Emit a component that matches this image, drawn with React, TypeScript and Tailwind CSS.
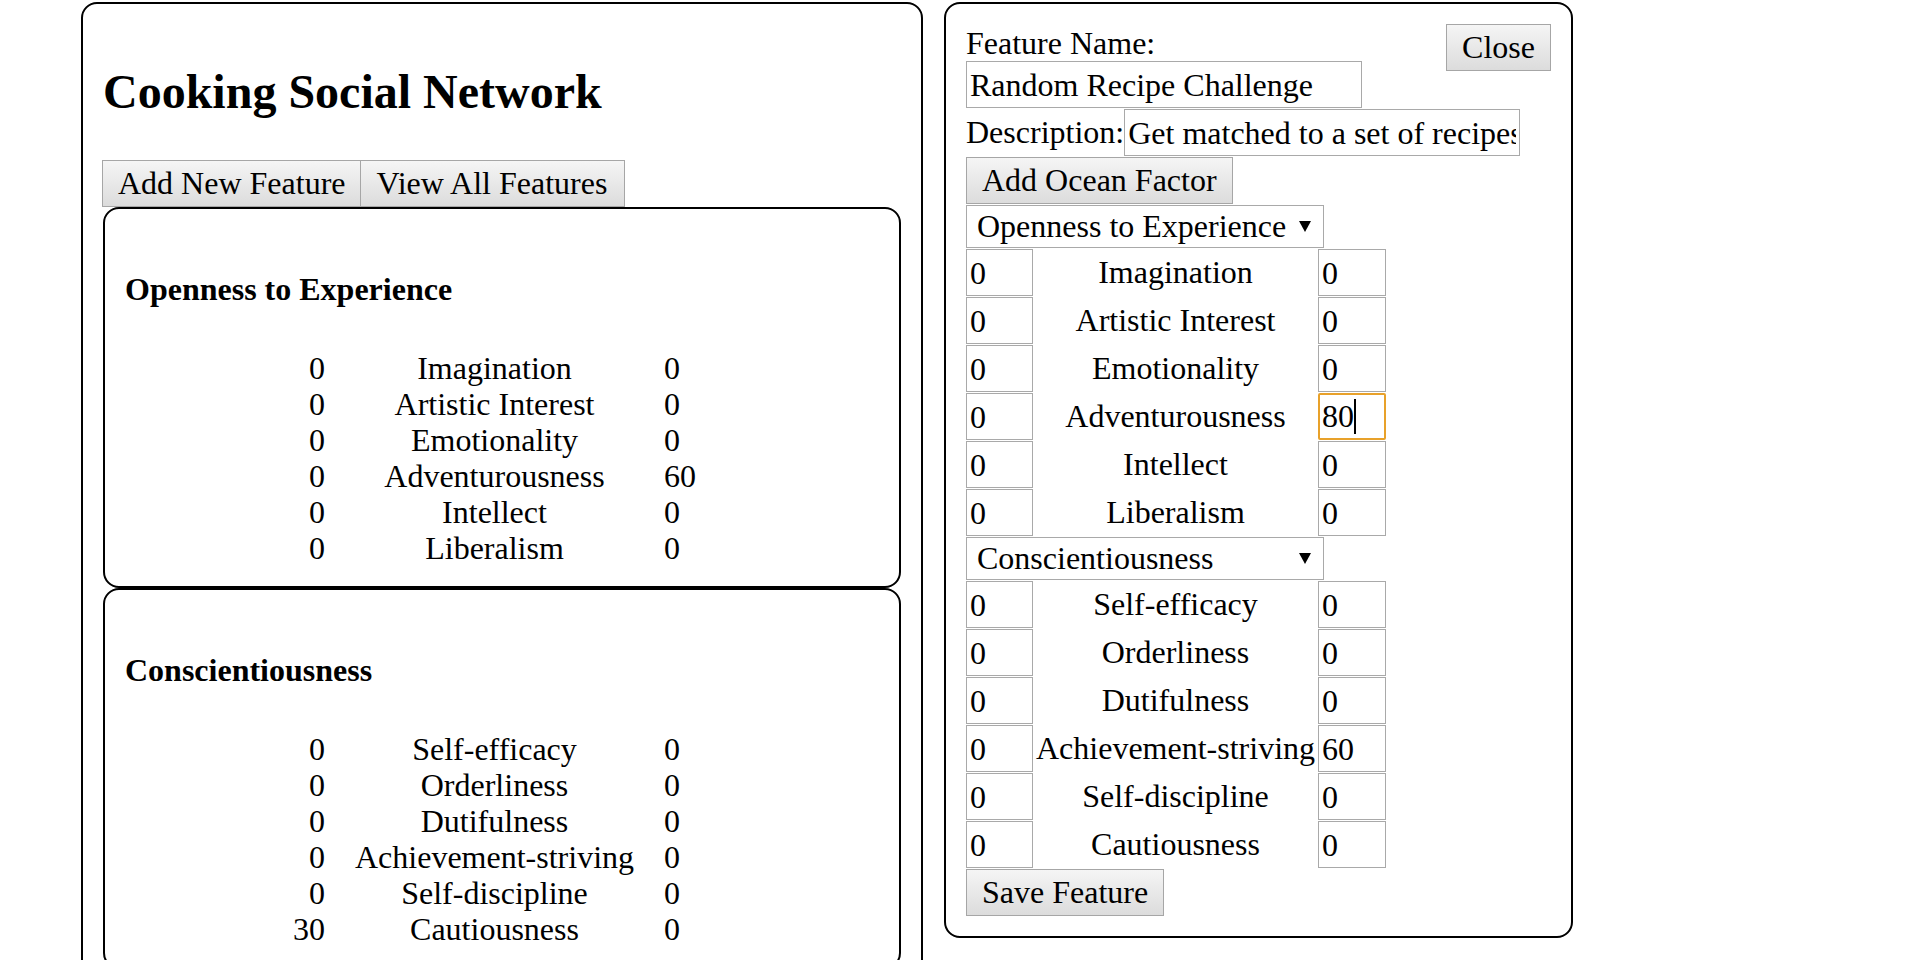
import React from 'react'

type Row = [number, string, number]

const openness: Row[] = [
  [0, 'Imagination', 0],
  [0, 'Artistic Interest', 0],
  [0, 'Emotionality', 0],
  [0, 'Adventurousness', 60],
  [0, 'Intellect', 0],
  [0, 'Liberalism', 0],
]

const conscientiousness: Row[] = [
  [0, 'Self-efficacy', 0],
  [0, 'Orderliness', 0],
  [0, 'Dutifulness', 0],
  [0, 'Achievement-striving', 0],
  [0, 'Self-discipline', 0],
  [30, 'Cautiousness', 0],
]

const formOpenness: Row[] = [
  [0, 'Imagination', 0],
  [0, 'Artistic Interest', 0],
  [0, 'Emotionality', 0],
  [0, 'Adventurousness', 80],
  [0, 'Intellect', 0],
  [0, 'Liberalism', 0],
]

const formConscientiousness: Row[] = [
  [0, 'Self-efficacy', 0],
  [0, 'Orderliness', 0],
  [0, 'Dutifulness', 0],
  [0, 'Achievement-striving', 60],
  [0, 'Self-discipline', 0],
  [0, 'Cautiousness', 0],
]

const btn =
  'h-[47px] px-[15px] border border-[#a6a6a6] bg-linear-to-b from-[#f5f5f5] to-[#dcdcdc] text-[32px] leading-[37px] text-black'

const field =
  'h-[47px] border border-[#a9a9a9] bg-white px-[3px] text-[32px] text-black outline-none'

function FactorCard({ title, rows }: { title: string; rows: Row[] }) {
  return (
    <div className="border-2 border-black rounded-[16px] p-[20px]">
      <h4 className="mt-[42px] mb-[42px] text-[32px] leading-[37px] font-bold">{title}</h4>
      <div className="grid grid-cols-[200px_339px_1fr] text-[32px] leading-[36px]">
        {rows.map(([lo, name, hi]) => (
          <React.Fragment key={name}>
            <div className="text-right">{lo}</div>
            <div className="text-center">{name}</div>
            <div>{hi}</div>
          </React.Fragment>
        ))}
      </div>
    </div>
  )
}

function FakeSelect({ label }: { label: string }) {
  return (
    <div className="w-[358px] h-[43px] mb-[1px] border border-[#a9a9a9] bg-white pl-[10px] pr-[12px] flex items-center justify-between">
      <span className="leading-[37px]">{label}</span>
      <svg width="12" height="11" viewBox="0 0 12 11">
        <polygon points="0,0 12,0 6,11" fill="#000" />
      </svg>
    </div>
  )
}

function FormRows({ rows }: { rows: Row[] }) {
  return (
    <div>
      {rows.map(([lo, name, hi]) => (
        <div key={name} className="flex h-[48px]">
          <input readOnly value={lo} className={`${field} w-[67px]`} />
          <div className="w-[285px] h-[47px] flex items-center justify-center leading-[37px]">{name}</div>
          {hi === 80 ? (
            <div className="w-[68px] h-[47px] border-2 border-[#e8a12a] rounded-[2px] bg-white pl-[2px] flex items-center leading-[37px]">
              {hi}
              <span className="inline-block w-[2px] h-[35px] bg-black" />
            </div>
          ) : (
            <input readOnly value={hi} className={`${field} w-[68px]`} />
          )}
        </div>
      ))}
    </div>
  )
}

function App() {
  return (
    <div className="h-screen overflow-hidden bg-white text-black font-['Liberation_Serif','Times_New_Roman',serif] text-[32px]">
      <div className="flex items-start gap-[21px] pl-[81px] pt-[2px]">
        {/* feature list */}
        <div className="w-[842px] shrink-0 border-2 border-black rounded-[16px] px-[20px] pt-[21px] pb-[20px]">
          <h1 className="mt-[39px] mb-[41px] text-[48px] leading-[55px] font-bold">Cooking Social Network</h1>
          <div className="flex -ml-[1px]">
            <button className={btn}>Add New Feature</button>
            <button className={`${btn} border-l-0 pr-[17px]`}>View All Features</button>
          </div>
          <FactorCard title="Openness to Experience" rows={openness} />
          <FactorCard title="Conscientiousness" rows={conscientiousness} />
        </div>

        {/* feature form */}
        <div className="w-[629px] shrink-0 border-2 border-black rounded-[16px] px-[20px] pt-[19px] pb-[20px]">
          <button className={`${btn} float-right mt-[1px]`}>Close</button>
          <div className="h-[38px] pt-[2px] leading-[36px]">Feature Name:</div>
          <input readOnly value="Random Recipe Challenge" className={`${field} block w-[396px] h-[46px] mb-[1px]`} />
          <div className="flex items-center h-[47px] mb-[1px]">
            <span className="leading-[37px]">Description:</span>
            <input readOnly value="Get matched to a set of recipes and cook them all" className={`${field} w-[396px]`} />
          </div>
          <button className={`${btn} block mb-[1px]`}>Add Ocean Factor</button>
          <FakeSelect label="Openness to Experience" />
          <FormRows rows={formOpenness} />
          <FakeSelect label="Conscientiousness" />
          <FormRows rows={formConscientiousness} />
          <button className={`${btn} block`}>Save Feature</button>
        </div>
      </div>
    </div>
  )
}

export default App
